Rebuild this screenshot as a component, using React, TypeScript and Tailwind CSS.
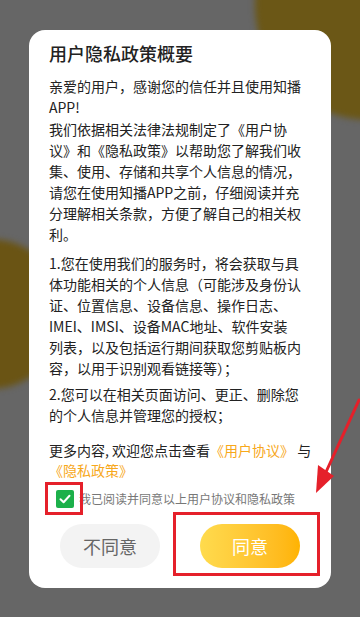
import React from "react";

const font = { fontFamily: '"Noto Sans CJK SC", "Noto Sans", sans-serif' };

function Lines({ lines }: { lines: string[] }) {
  return (
    <>
      {lines.map((l, i) => (
        <span key={i} className="block whitespace-nowrap">
          {l}
        </span>
      ))}
    </>
  );
}

export default function App() {
  return (
    <div
      className="relative w-[360px] h-[617px] overflow-hidden bg-[#666666] pt-[30px] px-[29px]"
      style={font}
    >
      {/* background blobs */}
      <div className="absolute left-[255px] top-[-110px] w-[230px] h-[230px] rounded-full bg-[#6b5716] blur-[3px]" />
      <div className="absolute left-[-85px] top-[239px] w-[150px] h-[150px] rounded-full bg-[#6a5414] blur-[3px]" />

      <div className="relative z-10 w-[302px] h-[558px] rounded-[16px] bg-white pl-[20px] pr-[10px] pt-[10px] pb-[20px] flex flex-col">
        <h1 className="text-[18px] leading-[26px] font-medium text-[#222]">用户隐私政策概要</h1>

        <div className="mt-[10px] text-[14px] leading-[21px] text-[#222]">
          <p>
            <Lines lines={["亲爱的用户，感谢您的信任并且使用知播", "APP!"]} />
          </p>
          <p className="mt-[1px]">
            <Lines
              lines={[
                "我们依据相关法律法规制定了《用户协",
                "议》和《隐私政策》以帮助您了解我们收",
                "集、使用、存储和共享个人信息的情况，",
                "请您在使用知播APP之前，仔细阅读并充",
                "分理解相关条款，方便了解自己的相关权",
                "利。",
              ]}
            />
          </p>
          <p className="mt-[8px]">
            <Lines
              lines={[
                "1.您在使用我们的服务时，将会获取与具",
                "体功能相关的个人信息（可能涉及身份认",
                "证、位置信息、设备信息、操作日志、",
                "IMEI、IMSI、设备MAC地址、软件安装",
                "列表，以及包括运行期间获取您剪贴板内",
                "容，以用于识别观看链接等）；",
              ]}
            />
          </p>
          <p className="mt-[5px]">
            <Lines lines={["2.您可以在相关页面访问、更正、删除您", "的个人信息并管理您的授权；"]} />
          </p>
          <p className="mt-[14px] leading-[20px]">
            <span className="block whitespace-nowrap">
              更多内容, 欢迎您点击查看<span className="text-[#f7a81b]">《用户协议》</span> 与
            </span>
            <span className="block whitespace-nowrap text-[#f7a81b]">《隐私政策》</span>
          </p>
        </div>

        <div className="mt-[10px] flex items-center h-[20px]">
          <div className="ml-[7px] w-[18px] h-[18px] rounded-[2px] bg-[#1cb04a] flex items-center justify-center">
            <svg width="12" height="10" viewBox="0 0 12 10" fill="none">
              <path d="M1.5 5.2 L4.6 8.2 L10.5 1.8" stroke="white" strokeWidth="2" strokeLinecap="round" strokeLinejoin="round" />
            </svg>
          </div>
          <span className="ml-[5px] text-[12px] text-[#777] whitespace-nowrap">我已阅读并同意以上用户协议和隐私政策</span>
        </div>

        <div className="mt-[16px] flex justify-center gap-[40px] -ml-[10px]">
          <button className="w-[100px] h-[44px] rounded-full bg-[#f3f3f3] text-[18px] text-[#666]">不同意</button>
          <button className="w-[100px] h-[44px] rounded-full bg-gradient-to-r from-[#ffdb4d] to-[#ffb300] text-[18px] text-white">
            同意
          </button>
        </div>
      </div>

      {/* red annotation boxes */}
      <div className="absolute z-20 left-[45px] top-[482px] w-[38px] h-[33px] border-[3px] border-[#e5202a]" />
      <div className="absolute z-20 left-[173px] top-[512px] w-[147px] h-[64px] border-[3px] border-[#e5202a]" />

      {/* red arrow */}
      <svg className="absolute z-20 left-0 top-0" width="360" height="617" viewBox="0 0 360 617">
        <line x1="359" y1="400" x2="326" y2="472" stroke="#e5202a" strokeWidth="3" strokeLinecap="round" />
        <polygon points="316,493 334,476 318,465" fill="#e5202a" />
      </svg>
    </div>
  );
}
